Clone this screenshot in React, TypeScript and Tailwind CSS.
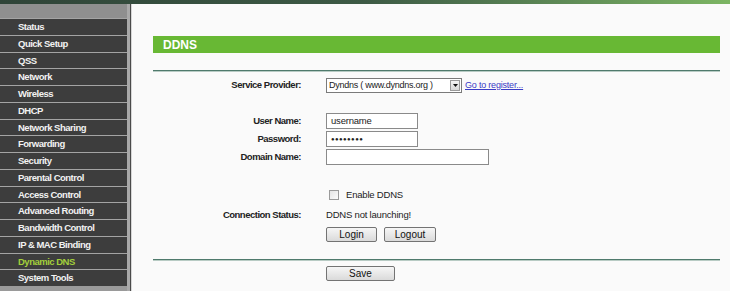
import type { FC, ReactNode } from 'react'

const menu = [
  'Status',
  'Quick Setup',
  'QSS',
  'Network',
  'Wireless',
  'DHCP',
  'Network Sharing',
  'Forwarding',
  'Security',
  'Parental Control',
  'Access Control',
  'Advanced Routing',
  'Bandwidth Control',
  'IP & MAC Binding',
  'Dynamic DNS',
  'System Tools',
]

const Sidebar = () => (
  <aside className="flex h-full w-[132px] shrink-0 bg-[#9b9b9b]">
    <div className="flex w-[127px] flex-col">
      <div className="h-[14px] bg-[#8f8f8f]" />
      {menu.map((item) => (
        <div
          key={item}
          className="flex h-[16.75px] items-center border-t border-[#a4a4a4] bg-[#3d3d3d] pl-[18px] text-[9.5px] font-bold leading-none tracking-[-0.5px]"
        >
          <span className={item === 'Dynamic DNS' ? 'text-[#a3cf3b]' : 'text-[#f2f2f2]'}>{item}</span>
        </div>
      ))}
      <div className="flex-1 bg-[#9a9a9a]" />
    </div>
    <div className="w-[3px] bg-[#a9a9a9]" />
    <div className="w-[1px] bg-[#4a4a4a]" />
    <div className="w-[1px] bg-[#d6d6d6]" />
  </aside>
)

const Row: FC<{ label?: string; className: string; children?: ReactNode }> = ({
  label,
  className,
  children,
}) => (
  <div className={`flex items-center ${className}`}>
    <div className="w-[170px] pr-[1px] text-right text-[9.5px] font-bold tracking-[-0.5px] text-[#222]">
      {label}
    </div>
    <div className="ml-[24px] flex items-center">{children}</div>
  </div>
)

const Divider: FC<{ className: string }> = ({ className }) => (
  <div className={`ml-[21px] w-[567px] ${className}`}>
    <div className="h-px bg-[#4f7a6c]" />
    <div className="h-px bg-[#b8cbc4]" />
  </div>
)

const TextInput: FC<{ width: string; value?: string; dots?: boolean }> = ({ width, value, dots }) => (
  <div
    className={`flex h-[16px] items-center border border-[#8a8a8a] bg-white pl-[4px] text-[9.5px] tracking-[-0.2px] text-[#222] ${width}`}
  >
    {dots ? <span className="text-[6px] tracking-[0.4px]">●●●●●●●●</span> : value}
  </div>
)

const Button: FC<{ width: string; children: ReactNode }> = ({ width, children }) => (
  <div
    className={`flex h-[15px] items-center justify-center rounded-[2px] border border-[#737373] bg-gradient-to-b from-[#f6f6f6] to-[#dadada] text-[10px] leading-none text-[#111] ${width}`}
  >
    {children}
  </div>
)

export default function App() {
  return (
    <div className="flex h-[291px] w-[730px] flex-col overflow-hidden bg-[#fafafa] font-['Liberation_Sans',Arial,sans-serif]">
      <div className="h-[4px] shrink-0 bg-gradient-to-r from-[#2f4438] via-[#3d5a45] to-[#7cb563]" />
      <div className="flex min-h-0 flex-1">
        <Sidebar />
        <main className="flex flex-1 flex-col pt-[32px]">
          <div className="ml-[21px] flex h-[17px] w-[567px] items-center bg-[#68b834] pl-[10px] text-[12px] font-bold text-white">
            DDNS
          </div>
          <Divider className="mt-[17px]" />

          <Row label="Service Provider:" className="mt-[6px] h-[15px]">
            <div className="flex h-[15px] w-[136px] items-center border border-[#7a7a7a] bg-white text-[9px] tracking-[-0.25px] text-[#222]">
              <span className="flex-1 whitespace-nowrap pl-[2px] leading-none">Dyndns ( www.dyndns.org )</span>
              <div className="mr-px flex h-[11px] w-[10px] items-center justify-center border border-[#9a9a9a] bg-gradient-to-b from-[#f4f4f4] to-[#d8d8d8]">
                <svg width="5" height="3" viewBox="0 0 5 3">
                  <path d="M0 0h5L2.5 3z" fill="#111" />
                </svg>
              </div>
            </div>
            <a className="ml-[3px] text-[9px] leading-none tracking-[-0.2px] text-[#3b3bc6] underline">
              Go to register...
            </a>
          </Row>

          <Row label="User Name:" className="mt-[20px] h-[16px]">
            <TextInput width="w-[92px]" value="username" />
          </Row>
          <Row label="Password:" className="mt-[2px] h-[16px]">
            <TextInput width="w-[92px]" dots />
          </Row>
          <Row label="Domain Name:" className="mt-[2px] h-[16px]">
            <TextInput width="w-[163px]" />
          </Row>

          <Row className="mt-[23px] h-[14px]">
            <div className="ml-[3px] h-[10px] w-[10px] border border-[#9a9a9a] bg-gradient-to-br from-[#e4e4e4] to-[#fbfbfb]" />
            <span className="ml-[7px] text-[9.5px] tracking-[-0.2px] text-[#222]">Enable DDNS</span>
          </Row>

          <Row label="Connection Status:" className="mt-[6px] h-[14px]">
            <span className="text-[9.5px] tracking-[-0.2px] text-[#222]">DDNS not launching!</span>
          </Row>

          <Row className="mt-[5px] h-[15px]">
            <Button width="w-[51px]">Login</Button>
            <div className="ml-[7px]">
              <Button width="w-[52px]">Logout</Button>
            </div>
          </Row>

          <Divider className="mt-[17px]" />

          <Row className="mt-[5px] h-[15px]">
            <Button width="w-[69px]">Save</Button>
          </Row>
        </main>
      </div>
    </div>
  )
}
